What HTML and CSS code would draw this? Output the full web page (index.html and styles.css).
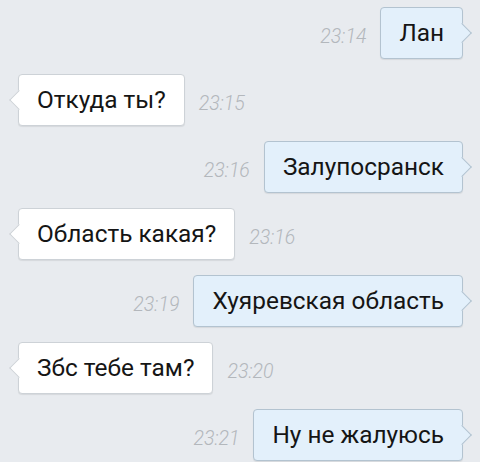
FILE: index.html
```html
<!DOCTYPE html>
<html lang="ru">
<head>
<meta charset="utf-8">
<link rel="stylesheet" href="styles.css">
</head>
<body>
<div class="chat">
  <div class="row out"><span class="time">23:14</span><div class="bubble">Лан</div></div>
  <div class="row in"><div class="bubble">Откуда ты?</div><span class="time">23:15</span></div>
  <div class="row out"><span class="time">23:16</span><div class="bubble">Залупосранск</div></div>
  <div class="row in"><div class="bubble">Область какая?</div><span class="time">23:16</span></div>
  <div class="row out"><span class="time">23:19</span><div class="bubble">Хуяревская область</div></div>
  <div class="row in"><div class="bubble">Збс тебе там?</div><span class="time">23:20</span></div>
  <div class="row out"><span class="time">23:21</span><div class="bubble">Ну не жалуюсь</div></div>
</div>
</body>
</html>
```
FILE: styles.css
```css
html, body {
  margin: 0;
  padding: 0;
  background: #e8ebef;
  width: 480px;
  height: 462px;
  overflow: hidden;
}
.chat {
  display: flex;
  flex-direction: column;
  gap: 15px;
  padding: 7px 17px 0 18px;
  font-family: Roboto, "Noto Sans", sans-serif;
}
.row {
  display: flex;
  align-items: center;
  gap: 14px;
}
.row.out { justify-content: flex-end; }
.row.in { justify-content: flex-start; }
.bubble {
  position: relative;
  font-size: 24.4px;
  line-height: 28px;
  padding: 11px 18px;
  border-radius: 4px;
  color: #151515;
  box-shadow: 0 1px 1px rgba(0,0,0,0.08);
}
.in .bubble {
  background: #fff;
  border: 1px solid #cdd2d7;
}
.out .bubble {
  background: #e3f0fb;
  border: 1px solid #b3c3d0;
}
.bubble::after {
  content: "";
  position: absolute;
  top: 50%;
  width: 13px;
  height: 13px;
  margin-top: -7px;
  transform: rotate(45deg);
}
.out .bubble::after {
  right: -7px;
  background: #e3f0fb;
  border-top: 1px solid #b3c3d0;
  border-right: 1px solid #b3c3d0;
}
.in .bubble::after {
  left: -7px;
  background: #fff;
  border-bottom: 1px solid #cdd2d7;
  border-left: 1px solid #cdd2d7;
}
.time {
  font-size: 19.5px;
  font-style: italic;
  font-weight: 300;
  color: #b3b7bc;
  margin-top: 6px;
}
```
